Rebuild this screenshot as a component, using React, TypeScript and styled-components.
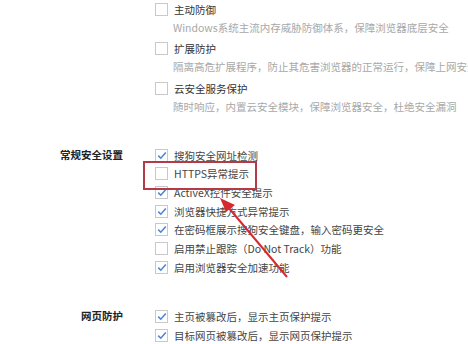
import styled, { createGlobalStyle } from 'styled-components';

const GlobalStyle = createGlobalStyle`
  html, body {
    margin: 0;
    padding: 0;
    background: #ffffff;
  }
  body {
    font-family: "Noto Sans CJK SC", "Noto Sans", "Liberation Sans", sans-serif;
    overflow: hidden;
  }
`;

const Page = styled.div`
  position: relative;
  width: 468px;
  height: 344px;
  overflow: hidden;
  background: #fff;
`;

const Section = styled.div<{ $top: number }>`
  display: grid;
  grid-template-columns: 155px 1fr;
  margin-top: ${(p) => p.$top}px;
`;

const Label = styled.div`
  text-align: right;
  padding-right: 32px;
  font-size: 10.5px;
  font-weight: 700;
  color: #222;
  line-height: 18.7px;
  white-space: nowrap;
`;

const List = styled.div`
  display: flex;
  flex-direction: column;
`;

const Group = styled.div`
  display: flex;
  flex-direction: column;
  padding-bottom: 3.3px;
`;

const Row = styled.div<{ $h: number }>`
  display: flex;
  align-items: center;
  gap: 6px;
  height: ${(p) => p.$h}px;
  white-space: nowrap;
`;

const Box = styled.span`
  flex: none;
  width: 11px;
  height: 11px;
  border: 1px solid #c9c9c9;
  background: #fff;
  display: flex;
  align-items: center;
  justify-content: center;
`;

const Text = styled.span<{ $dark?: boolean }>`
  font-size: 10.5px;
  color: ${(p) => (p.$dark ? '#333' : '#444')};
`;

const Desc = styled.div`
  height: 17px;
  line-height: 17px;
  padding-left: 18px;
  font-size: 10.5px;
  color: #a8a8a8;
  white-space: nowrap;
`;

const Highlight = styled.div`
  position: absolute;
  left: 143px;
  top: 161px;
  width: 110px;
  height: 25px;
  border: 2px solid #b23b47;
  pointer-events: none;
`;

const Arrow = styled.svg`
  position: absolute;
  left: 0;
  top: 0;
  pointer-events: none;
`;

const Check = ({ on }: { on: boolean }) => (
  <Box>
    {on && (
      <svg width="10" height="9" viewBox="0 0 10 9">
        <path d="M1.2 4.6 L3.8 7.2 L8.8 1.4" fill="none" stroke="#4f86d1" strokeWidth="1.6" />
      </svg>
    )}
  </Box>
);

const defense = [
  { title: '主动防御', desc: 'Windows系统主流内存威胁防御体系，保障浏览器底层安全' },
  { title: '扩展防护', desc: '隔离高危扩展程序，防止其危害浏览器的正常运行，保障上网安全' },
  { title: '云安全服务保护', desc: '随时响应，内置云安全模块，保障浏览器安全，杜绝安全漏洞' },
];

const general = [
  { text: '搜狗安全网址检测', on: true },
  { text: 'HTTPS异常提示', on: false },
  { text: 'ActiveX控件安全提示', on: true },
  { text: '浏览器快捷方式异常提示', on: true },
  { text: '在密码框展示搜狗安全键盘，输入密码更安全', on: true },
  { text: '启用禁止跟踪（Do Not Track）功能', on: false },
  { text: '启用浏览器安全加速功能', on: true },
];

const pageGuard = [
  { text: '主页被篡改后，显示主页保护提示', on: true },
  { text: '目标网页被篡改后，显示网页保护提示', on: true },
];

export default function App() {
  return (
    <Page>
      <GlobalStyle />
      <Section $top={0}>
        <div />
        <List>
          {defense.map((d) => (
            <Group key={d.title}>
              <Row $h={19}>
                <Check on={false} />
                <Text $dark>{d.title}</Text>
              </Row>
              <Desc>{d.desc}</Desc>
            </Group>
          ))}
        </List>
      </Section>

      <Section $top={28}>
        <Label>常规安全设置</Label>
        <List>
          {general.map((g) => (
            <Row key={g.text} $h={18.67}>
              <Check on={g.on} />
              <Text>{g.text}</Text>
            </Row>
          ))}
        </List>
      </Section>

      <Section $top={31}>
        <Label>网页防护</Label>
        <List>
          {pageGuard.map((g) => (
            <Row key={g.text} $h={18.5}>
              <Check on={g.on} />
              <Text>{g.text}</Text>
            </Row>
          ))}
        </List>
      </Section>

      <Highlight />
      <Arrow width="468" height="344" viewBox="0 0 468 344">
        <line x1="287" y1="277" x2="228" y2="207" stroke="#d42a2f" strokeWidth="2" />
        <polygon points="220,198 235,205 226,212" fill="#d42a2f" />
      </Arrow>
    </Page>
  );
}
